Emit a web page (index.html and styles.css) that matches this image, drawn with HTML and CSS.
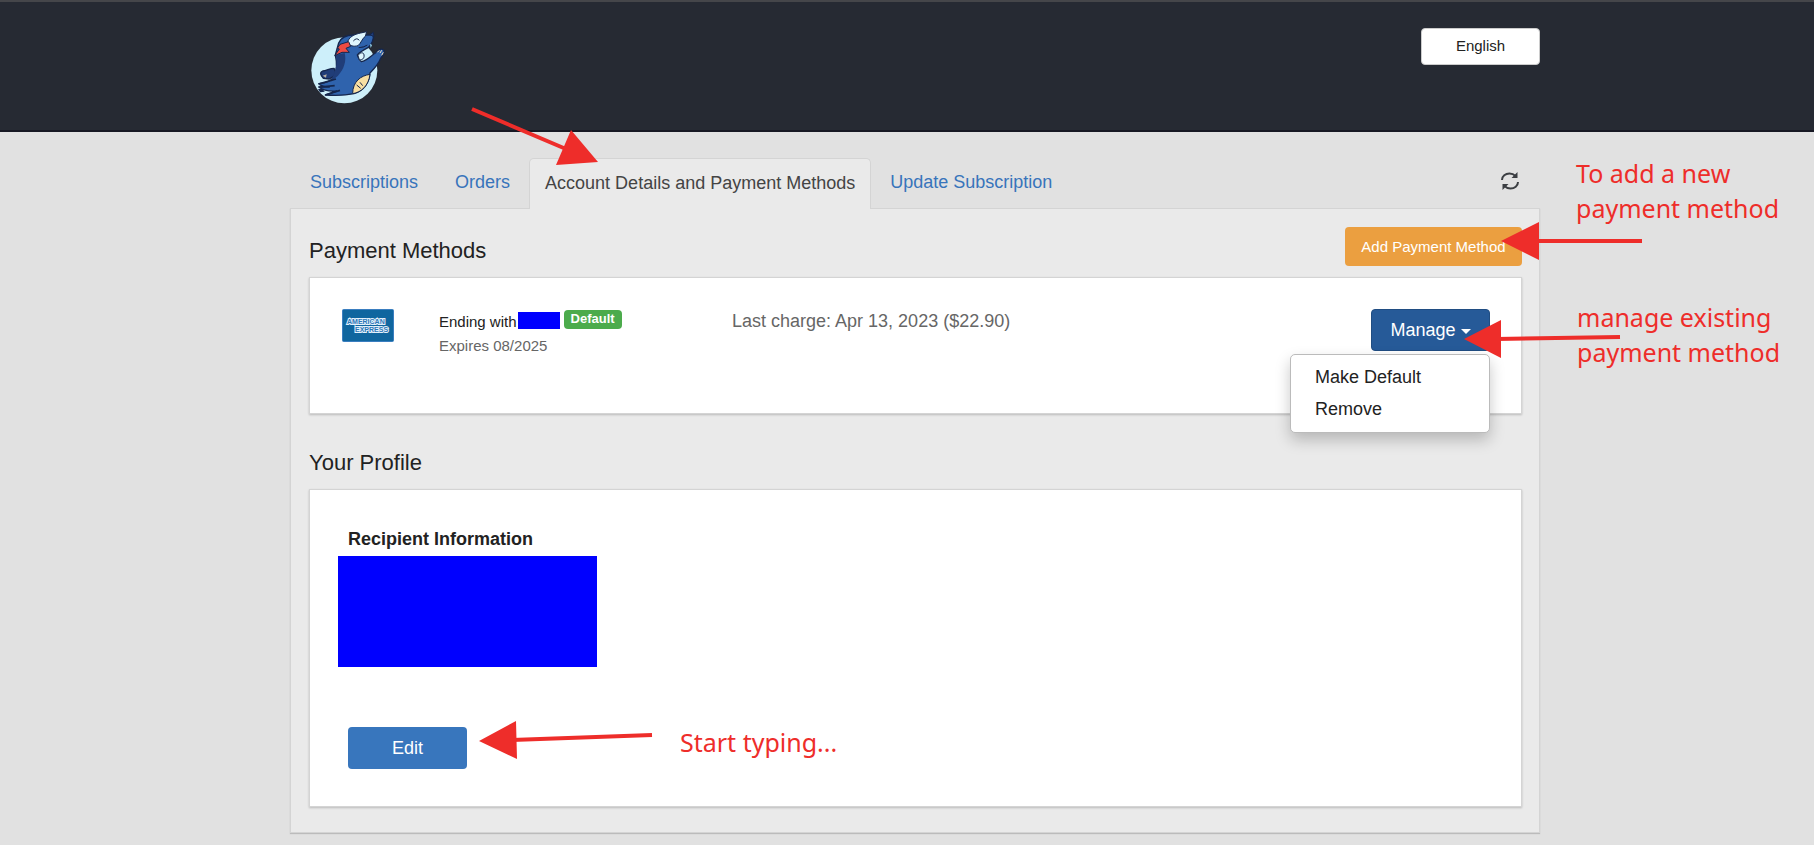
FILE: index.html
```html
<!DOCTYPE html>
<html lang="en">
<head>
<meta charset="utf-8">
<title>Account Details and Payment Methods</title>
<link rel="stylesheet" href="styles.css">
</head>
<body>
<header class="site-header">
  <div class="container header-row">
    <a class="logo" href="#" aria-label="Home">
      <svg width="80" height="80" viewBox="54 39 240 240">
        <circle cx="163" cy="166" r="99" fill="#cdeffa"/>
        <g stroke="#15264c" stroke-width="4" stroke-linejoin="round">
          <path d="M132 160 C118 160 110 168 98 168 C88 172 92 182 100 190 L118 192 L140 178 Z" fill="#203d78"/>
          <path d="M136 120 L146 84 C154 66 168 60 190 60 L250 60 C252 74 244 90 234 98 C222 104 210 110 202 120 C206 128 206 136 214 140 C230 138 244 122 256 114 C264 104 276 98 282 106 C284 118 276 124 272 130 C266 148 254 160 240 174 C238 204 220 228 192 236 C164 242 134 242 106 240 L140 228 C120 230 100 226 86 216 L118 216 C104 216 92 212 86 206 C112 204 124 198 132 184 C142 164 142 146 136 120 Z" fill="#2f63ad"/>
          <path d="M138 120 L164 114 C170 138 162 162 144 182 L122 200 C130 178 144 160 138 120 Z" fill="#203d78" stroke="none"/>
          <path d="M106 240 L150 226 M88 216 L134 212 M90 206 L138 192" fill="none" stroke-width="5"/>
          <path d="M172 84 C176 66 192 58 212 54 L230 50 L226 64 C216 70 214 84 204 92 C190 96 180 92 172 84 Z" fill="#dff6fd" stroke-width="3"/>
          <path d="M190 78 Q200 66 208 76" fill="none" stroke-width="3"/>
          <path d="M206 98 Q222 98 232 90 M240 58 L250 52 L252 66 Z" fill="#203d78" stroke-width="3"/>
          <path d="M150 88 L176 80 L182 94 L168 100 L178 112 L156 112 L134 122 L148 102 L142 100 Z" fill="#ee4b42" stroke-width="3"/>
          <path d="M204 122 C210 110 222 112 222 120 C224 130 216 136 208 134 Z" fill="#dff6fd" stroke-width="3"/>
          <path d="M240 178 C212 182 188 200 188 236 C214 232 236 212 240 178 Z" fill="#f8dfa2" stroke-width="3"/>
          <path d="M200 210 L212 220 M210 202 L218 212" stroke-width="3"/>
        </g>
        <path d="M98 182 L110 178 L108 188 Z" fill="#b9b0a4"/>
        <path d="M262 112 L268 106 M270 114 L275 106 M275 121 L280 112" stroke="#f7e8c8" stroke-width="3"/>
        <path d="M84 222 L98 222 L104 230 L90 232 Z" fill="#15264c"/>
        <path d="M240 86 L246 90 L242 99 Z" fill="#9adcf2"/>
      </svg>
    </a>
    <button class="btn btn-light" type="button">English</button>
  </div>
</header>

<main class="container">
  <nav class="tabs">
    <a class="tab" href="#">Subscriptions</a>
    <a class="tab" href="#">Orders</a>
    <a class="tab tab-active" href="#" aria-current="page">Account Details and Payment Methods</a>
    <a class="tab" href="#">Update Subscription</a>
    <button class="refresh" type="button" aria-label="Refresh">
      <svg width="18" height="18" viewBox="0 0 18 18" fill="none" stroke="#3b3e42" stroke-width="2">
        <path d="M1 8 C1 4 4.500 1.500 8.500 1.500 C11 1.500 13 2.500 14.500 4"/>
        <path d="M17 10 C17 14 13.500 16.500 9.500 16.500 C7 16.500 5 15.500 3.500 14"/>
        <path d="M16.500 0 V6 H10.500 Z M1.500 18 V12 H7.500 Z" fill="#3b3e42" stroke="none"/>
      </svg>
    </button>
  </nav>

  <div class="panel">
    <section>
      <div class="section-head">
        <h2>Payment Methods</h2>
        <button class="btn btn-add" type="button">Add Payment Method</button>
      </div>
      <div class="card payment">
        <svg class="amex" width="52" height="33" viewBox="0 0 52 33" role="img" aria-label="American Express">
          <rect x="0.500" y="0.500" width="51" height="32" rx="1" fill="#10669f" stroke="#3a7ec0"/>
          <g fill="#2d78b8" stroke="#e4f1fb" stroke-width="2" paint-order="stroke" font-family="Liberation Sans, sans-serif" font-weight="bold" font-size="7">
            <text x="5" y="15">AMERICAN</text>
            <text x="13" y="23">EXPRESS</text>
          </g>
        </svg>
        <div class="card-info">
          <div class="ending">Ending with <span class="mask"></span><span class="badge">Default</span></div>
          <div class="expires">Expires 08/2025</div>
        </div>
        <div class="charge">Last charge: Apr 13, 2023 ($22.90)</div>
        <div class="dropdown">
          <button class="btn btn-manage" type="button" aria-expanded="true">Manage <span class="caret"></span></button>
          <div class="menu">
            <button type="button">Make Default</button>
            <button type="button">Remove</button>
          </div>
        </div>
      </div>
    </section>

    <section>
      <div class="section-head">
        <h2>Your Profile</h2>
      </div>
      <div class="card profile">
        <h3>Recipient Information</h3>
        <div class="mask-block"></div>
        <button class="btn btn-edit" type="button">Edit</button>
      </div>
    </section>
  </div>
</main>

<svg class="arrows" width="1814" height="845" viewBox="0 0 1814 845" fill="#ee2d2a" stroke="#ee2d2a" aria-hidden="true">
  <path d="M472 109 L566 149 M1642 241 H1530 M1620 337 L1496 339 M652 735 L512 740" stroke-width="4"/>
  <path d="M571 130 L598 162 L556 165 Z M1501 241 L1539 222 V260 Z M1464 339 L1501 320 V358 Z M479 741 L516 721 L517 759 Z" stroke="none"/>
</svg>
<p class="note note-add">To add a new<br>payment method</p>
<p class="note note-manage">manage existing<br>payment method</p>
<p class="note note-edit">Start typing...</p>
</body>
</html>
```
FILE: styles.css
```css
* { box-sizing: border-box; }

body {
  margin: 0;
  min-height: 100vh;
  position: relative;
  background: #e1e1e1;
  color: #222;
  font: 18px/24px "Liberation Sans", Arial, sans-serif;
}

h2, h3, p { margin: 0; }

button {
  font: inherit;
  cursor: pointer;
}

.container {
  max-width: 1250px;
  margin: 0 auto;
  position: relative;
  left: 8px;
}

.site-header {
  height: 132px;
  background: #262a33;
  border-top: 2px solid #45464a;
  border-bottom: 2px solid #171823;
}

.header-row {
  display: flex;
  justify-content: space-between;
  align-items: flex-start;
  padding: 26px 0 0 18px;
}

.logo svg { display: block; }

.btn {
  border: 0;
  border-radius: 4px;
  color: #fff;
  text-align: center;
  padding: 0;
}

.btn-light {
  width: 119px;
  height: 37px;
  padding-bottom: 2px;
  background: #fff;
  border: 1px solid #ccc;
  color: #222;
  font-size: 15px;
}

.tabs {
  display: flex;
  gap: 1px;
  align-items: flex-end;
  padding: 26px 2px 0;
}

.tab {
  height: 50px;
  padding: 12px 18px;
  color: #3874bb;
  text-decoration: none;
}

.tab-active {
  height: 51px;
  margin-bottom: -1px;
  padding: 12px 15px;
  position: relative;
  z-index: 1;
  background: #eaeaea;
  border: 1px solid #d4d4d4;
  border-bottom: 0;
  border-radius: 5px 5px 0 0;
  color: #444;
}

.refresh {
  margin: 0 19px 18px auto;
  padding: 0;
  border: 0;
  background: none;
}

.refresh svg { display: block; }

.panel {
  padding: 18px 17px 25px 18px;
  background: #eaeaea;
  border: 1px solid #d4d4d4;
  box-shadow: 0 1px 1px #bbb;
}

.section-head {
  display: flex;
  justify-content: space-between;
  align-items: center;
  height: 39px;
  margin-bottom: 11px;
}

h2 {
  font-size: 22px;
  font-weight: normal;
  padding-top: 9px;
}

.card {
  background: #fff;
  border: 1px solid #d4d4d4;
  box-shadow: 0 1px 2px #bbb;
}

.payment {
  display: flex;
  align-items: flex-start;
  min-height: 137px;
  margin-bottom: 25px;
  padding: 31px 31px 0 32px;
}

.card-info {
  width: 292px;
  margin-left: 45px;
  padding-top: 1px;
  font-size: 15px;
}

.ending {
  display: flex;
  align-items: center;
}

.expires { color: #666; }

.mask {
  width: 42px;
  height: 17px;
  margin: 0 4px 4px 1px;
  background: #00f;
}

.badge {
  padding: 0 7px 1px;
  margin-bottom: 5px;
  border-radius: 4px;
  background: #4cab4c;
  color: #fff;
  font-weight: bold;
  font-size: 13px;
  line-height: 18px;
}

.charge {
  margin-left: 1px;
  color: #666;
}

.dropdown {
  position: relative;
  margin-left: auto;
}

.btn-manage {
  display: block;
  width: 119px;
  height: 42px;
  background: #265a98;
  border: 1px solid #204d82;
}

.caret {
  display: inline-block;
  border: 5px solid transparent;
  border-top-color: #fff;
  border-bottom: 0;
  vertical-align: middle;
}

.menu {
  position: absolute;
  top: 45px;
  right: 0;
  width: 200px;
  padding: 6px 0 7px;
  background: #fff;
  border: 1px solid #bbb;
  border-radius: 5px;
  box-shadow: 0 7px 15px rgba(0, 0, 0, .22);
}

.menu button {
  display: block;
  width: 100%;
  padding: 4px 24px;
  border: 0;
  background: none;
  color: #222;
  text-align: left;
}

.profile { padding: 37px 38px; }

h3 {
  font-size: 18px;
}

.mask-block {
  width: 259px;
  height: 111px;
  margin: 5px 0 60px -10px;
  background: #00f;
}

.btn-edit {
  display: block;
  width: 119px;
  height: 42px;
  background: #3876bd;
}

.btn-add {
  width: 177px;
  height: 39px;
  background: #eb9f40;
  font-size: 15px;
}

.arrows {
  position: absolute;
  top: 0;
  left: 0;
  z-index: 5;
  pointer-events: none;
}

.note {
  position: absolute;
  z-index: 5;
  color: #ee2d2a;
  font: 25px/35px "Noto Sans", "Open Sans", sans-serif;
}

.note-add { left: 1576px; top: 156px; }
.note-manage { left: 1577px; top: 300px; }
.note-edit { left: 680px; top: 725px; }
```
